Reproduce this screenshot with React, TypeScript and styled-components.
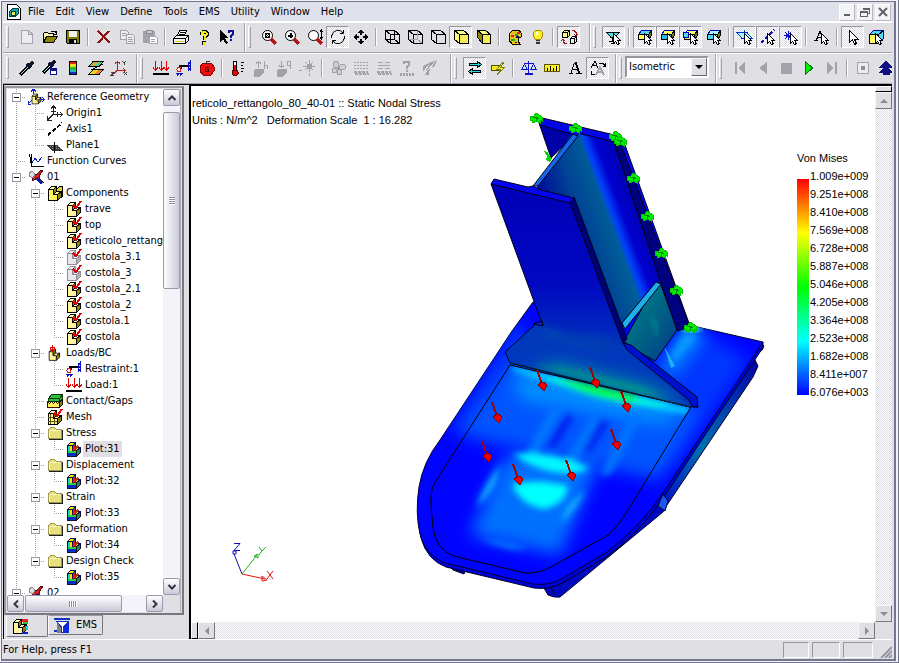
import React, { useState } from "react";
import styled, { createGlobalStyle, css } from "styled-components";

const Global = createGlobalStyle`
  * { box-sizing: border-box; }
  body { margin: 0; background: #e0dfe3; }
  button, select { font: inherit; color: inherit; margin: 0; padding: 0; border: 0; background: none; border-radius: 0; }
  ul { list-style: none; margin: 0; padding: 0; }
`;

const dither = css`
  background-color: #fff;
  background-image: conic-gradient(#dddce2 25%, transparent 0 50%, #dddce2 0 75%, transparent 0);
  background-size: 2px 2px;
`;

/* ---------- window frame ---------- */

const Desktop = styled.div`
  height: 100vh;
  min-height: 400px;
  display: flex;
  padding: 1px 2px 1px 1px;
  background: #f4f4f8;
  border-right: 1px solid #75758f;
  border-bottom: 1px solid #75758f;
  font: 11px/16px "DejaVu Sans Condensed", "Noto Sans", sans-serif;
  color: #000;
`;

const Frame = styled.div`
  flex: 1;
  min-width: 0;
  display: flex;
  flex-direction: column;
  border: 2px solid #75758f;
  border-top-width: 1px;
  border-left-width: 1px;
  background: #e0dfe3;
  padding: 0 2px 0 1px;
  overflow: hidden;
`;

const MenuBar = styled.nav`
  display: flex;
  align-items: center;
  gap: 1px;
  height: 20px;
  padding: 0 1px 0 4px;
  background: #dfe2ea;
  box-shadow: inset 0 -1px #fff;
  flex: none;
`;

const DocIcon = styled.span`
  width: 14px;
  height: 16px;
  display: flex;
  margin-right: 1px;
`;

const MenuItem = styled.button`
  padding: 0 5px;
  font-size: 11px;
`;

const WindowButtons = styled.div`
  margin-left: auto;
  display: flex;
  gap: 2px;
`;

const WindowButton = styled.button`
  width: 16px;
  height: 17px;
  display: grid;
  place-items: center;
  background: #f4f4f6;
  border: 1px solid;
  border-color: #fff #b8b8c0 #b8b8c0 #fff;
`;

/* ---------- toolbars ---------- */

const ToolRow = styled.div`
  display: flex;
  flex: none;
  height: 31px;
  border-top: 1px solid #fff;
  border-bottom: 1px solid #a5a4ac;
  overflow: hidden;
`;

const Band = styled.div<{ $grow?: boolean; $roomy?: boolean }>`
  display: flex;
  align-items: center;
  flex: ${(p) => (p.$grow ? "1 0 auto" : "none")};
  padding: 0 ${(p) => (p.$roomy ? 9 : 6)}px 2px 3px;
  border-right: ${(p) => (p.$grow ? "0" : "1px solid #a5a4ac")};
  & + & { box-shadow: inset 1px 0 #fff; }
`;

const Grip = styled.span`
  width: 3px;
  height: 22px;
  margin-right: 6px;
  border: 1px solid;
  border-color: #fff #a5a4ac #a5a4ac #fff;
  flex: none;
`;

const Tool = styled.button<{ $on?: boolean }>`
  width: 23px;
  height: 22px;
  display: grid;
  place-items: center;
  flex: none;
  border: 1px solid transparent;
  ${(p) =>
    p.$on &&
    css`
      ${dither}
      border-color: #98979f #fff #fff #98979f;
    `}
`;

const Divider = styled.span`
  width: 2px;
  height: 18px;
  margin: 0 3px;
  border-left: 1px solid #a5a4ac;
  border-right: 1px solid #fff;
  flex: none;
`;

const Glyph = styled.svg`
  width: 16px;
  height: 16px;
  display: block;
  overflow: visible;
  fill: none;
  shape-rendering: crispEdges;
`;

const Combo = styled.label`
  display: flex;
  width: 84px;
  height: 22px;
  margin: 0 0 2px -3px;
  border: 2px solid;
  border-color: #98979f #fff #fff #98979f;
  background: #fff;
`;

const ComboSelect = styled.select`
  appearance: none;
  flex: 1;
  min-width: 0;
  padding-left: 2px;
  outline: none;
`;

const ComboArrow = styled.span`
  width: 16px;
  display: grid;
  place-items: center;
  background: #e0dfe3;
  border: 1px solid;
  border-color: #f4f4f8 #68686f #68686f #f4f4f8;
  pointer-events: none;
`;

/* ---------- work area ---------- */

const Work = styled.main`
  flex: 1;
  min-height: 0;
  display: flex;
  border-top: 1px solid #000;
`;

const SidePane = styled.aside`
  width: 184px;
  flex: none;
  display: flex;
  flex-direction: column;
  border-left: 1px solid #000;
`;

const TreeFrame = styled.div`
  flex: 1;
  min-height: 0;
  display: flex;
  margin: 1px 3px 0 0;
  border: 2px solid;
  border-color: #98979f #77777f #77777f #98979f;
  padding: 1px;
`;

const TreeGrid = styled.div`
  flex: 1;
  min-width: 0;
  display: grid;
  grid-template-columns: minmax(0, 1fr) 17px;
  grid-template-rows: minmax(0, 1fr) 17px;
  background: #fff;
  border-right: 1px solid #b0b0b8;
`;

const Tree = styled.ul`
  overflow: hidden;
  min-height: 0;
`;

const Row = styled.li`
  display: flex;
  height: 16px;
  white-space: nowrap;
`;

const Guide = styled.span<{ $kind: string }>`
  width: 19px;
  height: 16px;
  flex: none;
  display: grid;
  place-items: center;
  --v: repeating-linear-gradient(#a0a09c 0 1px, transparent 1px 2px);
  --h: repeating-linear-gradient(90deg, #a0a09c 0 1px, transparent 1px 2px);
  background-repeat: no-repeat;
  background-position: 9px 0, 9px 8px;
  background-image: ${(p) => (p.$kind === " " ? "none" : p.$kind === "v" ? "var(--v)" : "var(--v), var(--h)")};
  background-size: 1px ${(p) => (p.$kind === "l" ? "8px" : "16px")}, 10px 1px;
`;

const Expander = styled.button`
  width: 9px;
  height: 9px;
  background: linear-gradient(#000, #000) center / 5px 1px no-repeat #fff;
  border: 1px solid #98979f;
`;

const NodeIcon = styled.span`
  width: 19px;
  flex: none;
  display: grid;
  place-items: center;
`;

const NodeLabel = styled.span<{ $selected?: boolean }>`
  padding: 0 2px;
  background: ${(p) => (p.$selected ? "#e0dfe3" : "none")};
`;

const Bar = styled.div<{ $dir: "v" | "h" }>`
  display: flex;
  flex-direction: ${(p) => (p.$dir === "v" ? "column" : "row")};
  justify-content: space-between;
  background: #f3f3f9;
`;

const BarButton = styled.button`
  width: 17px;
  height: 17px;
  flex: none;
  display: grid;
  place-items: center;
  border: 1px solid #9a9aac;
  border-radius: 2px;
  background: linear-gradient(#fff, #c9cad8);
`;

const Thumb = styled.span<{ $dir: "v" | "h" }>`
  display: grid;
  place-items: center;
  border: 1px solid #9a9aac;
  border-radius: 2px;
  background: linear-gradient(${(p) => (p.$dir === "v" ? "90deg" : "180deg")}, #fff, #c9cad8);
  ${(p) =>
    p.$dir === "v"
      ? css`height: 35%; margin: 6px 0 auto;`
      : css`width: 62%; margin: 0 auto 0 1px;`}
`;

const Ribs = styled.i<{ $dir: "v" | "h" }>`
  width: ${(p) => (p.$dir === "v" ? 6 : 8)}px;
  height: ${(p) => (p.$dir === "v" ? 8 : 6)}px;
  background: repeating-linear-gradient(${(p) => (p.$dir === "v" ? "180deg" : "90deg")}, #8d8d9f 0 1px, #fff 1px 2px);
`;

const Tabs = styled.div`
  display: flex;
  height: 22px;
  margin: 0 0 2px 2px;
`;

const Tab = styled.button<{ $active?: boolean }>`
  display: flex;
  align-items: center;
  gap: 6px;
  padding: 0 5px;
  height: ${(p) => (p.$active ? 22 : 20)}px;
  width: ${(p) => (p.$active ? "42px" : "auto")};
  border: 1px solid;
  border-color: ${(p) => (p.$active ? "transparent" : "#98979f")} #77777f #77777f #fff;
  border-radius: 0 0 2px 2px;
`;

const ViewFrame = styled.section`
  flex: 1;
  min-width: 0;
  margin-left: 2px;
  border-left: 2px solid #000;
  border-top: 1px solid #000;
  display: grid;
  grid-template-columns: minmax(0, 1fr) 17px;
  grid-template-rows: minmax(0, 1fr) 17px;
`;

const Viewport = styled.div`
  background: #fff;
  display: flex;
  min-width: 0;
  min-height: 0;
  overflow: hidden;
  font: 11px/17px "Liberation Sans", Arial, sans-serif;
`;

const Notes = styled.div`
  flex: 1;
  min-width: 0;
  display: flex;
  flex-direction: column;
  justify-content: space-between;
  padding: 9px 0 35px 1px;
  white-space: pre;
`;

const Caption = styled.p`
  margin: 0;
`;

const TriadSvg = styled.svg`
  width: 56px;
  height: 46px;
  margin-left: 35px;
`;

const ModelSvg = styled.svg`
  width: 360px;
  height: 500px;
  margin-top: 19px;
  flex: none;
`;

const Legend = styled.div`
  width: 78px;
  margin: 64px 0 0 27px;
  flex: none;
`;

const LegendBody = styled.div`
  display: flex;
`;

const Ramp = styled.div`
  width: 12px;
  margin: 12px 1px 6px 0;
  background: linear-gradient(#f00, #ff0 25%, #0f0 50%, #0ff 75%, #00f);
`;

const Values = styled.ul`
  line-height: 18px;
`;

const OldBar = styled.div<{ $dir: "v" | "h" }>`
  ${dither}
  display: flex;
  flex-direction: ${(p) => (p.$dir === "v" ? "column" : "row")};
`;

const SplitBox = styled.span<{ $dir: "v" | "h" }>`
  background: #e0dfe3;
  flex: none;
  border: 1px solid;
  border-color: #fff #000 #000 #fff;
  ${(p) => (p.$dir === "v" ? css`height: 6px;` : css`width: 7px;`)}
`;

const OldButton = styled.button<{ $end?: boolean; $dir: "v" | "h" }>`
  width: 17px;
  height: 17px;
  flex: none;
  display: grid;
  place-items: center;
  background: #e0dfe3;
  border: 1px solid;
  border-color: #f8f8fa #77777f #77777f #f8f8fa;
  ${(p) => p.$end && (p.$dir === "v" ? css`margin-top: auto;` : css`margin-left: auto;`)}
`;

const Corner = styled.span`
  background: #e0dfe3;
`;

const StatusBar = styled.footer`
  display: flex;
  flex: none;
  height: 20px;
  align-items: center;
  border-top: 1px solid #fff;
  gap: 3px;
`;

const StatusText = styled.span`
  flex: 1;
`;

const Pane = styled.span<{ $w: number }>`
  width: ${(p) => p.$w}px;
  height: 16px;
  border: 1px solid;
  border-color: #98979f #fff #fff #98979f;
`;

const SizeGrip = styled.svg`
  width: 12px;
  height: 12px;
  margin: 4px 0 0 4px;
`;

/* ---------- icon drawings, on a 16 x 16 grid ---------- */

const G = "#a3a2aa";
const K = "#000";

const cursorArrow = <path d="M7.500 4.500v10l2-2 2 3 2-1-2-3h3z" fill="#fff" stroke="#000" strokeWidth="1" />;

const block = (front: string, top: string, side: string, line = K) => (
  <g stroke={line} strokeLinejoin="round">
    <path d="M1.500 4.500h5v5h4v6h-9z" fill={front} />
    <path d="M1.500 4.500l3-3h5l-3 3z" fill={top} />
    <path d="M6.500 4.500l3-3v5l-3 3zM10.500 9.500l4-3v5l-4 4z" fill={side} />
    <path d="M6.500 9.500l3-3h5l-4 3z" fill={top} />
  </g>
);

const tick = <path d="M7 4l3 3 5-7" stroke="#e00000" strokeWidth="2" />;

const folder = (
  <g>
    <path d="M1.500 4.500l2-2h4l2 2h5v9h-13z" fill="#e6e07c" stroke="#a0984a" />
    <path d="M2 14.500h13.500V5" stroke="#202020" />
    <path d="M2.500 6v6M3 5.500h10" stroke="#fffcc8" />
  </g>
);

const wireCube = (front: string, hidden: string | null, top = "none") => (
  <g stroke={K}>
    <path d="M1.500 1.500h9l5 4v9h-9l-5-4z" fill={top} />
    <path d="M6.500 5.500h9v9h-9z" fill={front} />
    <path d="M1.500 1.500l5 4" />
    {hidden && <path d="M10.500 1.500v9h-9M10.500 10.500l5 4" stroke={hidden} />}
  </g>
);

const magnifier = (
  <g>
    <circle cx="6.500" cy="6.500" r="5" fill="#fff" stroke={K} shapeRendering="geometricPrecision" />
    <path d="M10 10l5 5" stroke="#b01818" strokeWidth="3" />
  </g>
);

const pickBox = (top: string, front: string) => (
  <g>
    <path d="M1.500 5.500l3-4h10l-3 4z" fill={top} stroke="#0000b0" />
    <path d="M1.500 5.500h10v5h-10z" fill={front} stroke={K} />
    <path d="M11.500 5.500l3-4v5l-3 4z" fill="#7a7a00" stroke={K} />
    {cursorArrow}
  </g>
);

const loads = (
  <g>
    <path d="M2.500 1v9M8.500 1v9M13.500 1v9M0 7.500l2.500 3 2.500-3M6 7.500l2.500 3 2.500-3M11 7.500l2.500 3 2.500-3" stroke="#e00000" />
    <path d="M0 14h16" stroke={K} strokeWidth="2" />
  </g>
);

const restraint = (
  <g>
    <path d="M3 6h9M5 5v4" stroke={K} strokeWidth="2" />
    <path d="M12 5l3-4M12 8l3-4M12 11l3-4M14.500 0v11M12.500 2v8" stroke="#1010c0" />
    <circle cx="3" cy="9.500" r="2" fill="#fff" stroke="#d02020" />
    <path d="M0 13.500h7M1 15.500l2-2M4 15.500l2-2" stroke="#1010c0" />
  </g>
);

const part = block("#fff3a0", "#ffffc0", "#8a8400");
const plot = (
  <g>
    {block("#30d040", "#f0e820", "#209040", "#101040")}
    <path d="M2 12h8v3h-8z" fill="#0030c0" />
    <path d="M2 5h1v6h-1z" fill="#20d0c0" />
    <path d="M4 5h2v5h-2z" fill="#ffe000" />
    <path d="M8 4v5l4-4" stroke="#d02010" strokeWidth="2" />
  </g>
);

const icons: Record<string, React.ReactNode> = {
  new: <path d="M2.500 1.500h7l4 3.500v9.500h-11zM9.500 1.500v4h4" fill="#ecebef" stroke={G} />,
  open: (
    <g stroke={K}>
      <path d="M1.500 13.500v-9l1-1h3l1 1h5v3" fill="#fff8a0" />
      <path d="M1.500 13.500l3-6h11l-4 6z" fill="#8a8400" />
      <path d="M9 2.500h4l1.500 2.500M14.500 2v3.500h-3" />
    </g>
  ),
  save: (
    <g>
      <path d="M1.500 1.500h13v13h-12l-1-1z" fill="#808000" stroke={K} />
      <path d="M4 2h8v6h-8z" fill="#f0f0f0" />
      <path d="M4 10h8v5h-8z" fill={K} />
      <path d="M9 11h2v3h-2z" fill="#e0dfe3" />
    </g>
  ),
  delete: <path d="M2 2l12 12M13 2l-11 12" stroke="#8c1010" strokeWidth="2" />,
  copy: (
    <g fill="#ecebef" stroke={G}>
      <path d="M1.500 1.500h6l2 2v7h-8zM3 4.500h4M3 6.500h4" />
      <path d="M7.500 5.500h6l2 2v7h-8zM9 8.500h4M9 10.500h5M9 12.500h5" />
    </g>
  ),
  paste: (
    <g>
      <path d="M1 2h12v12h-12z" fill={G} />
      <path d="M4 1h6v3h-6z" fill="#c8c8cf" stroke="#8d8d95" />
      <path d="M7.500 7.500h6l2 2v5h-8zM9 10.500h4M9 12.500h4" fill="#fff" stroke={G} />
    </g>
  ),
  print: (
    <g stroke={K}>
      <path d="M4.500 6.500l2-5h7l-2 5z" fill="#fff" />
      <path d="M7 3.500h5M6 5.500h5" />
      <path d="M.5 9.500l3-3h12v5l-3 3h-12z" fill="#f4f4f4" />
      <path d="M.5 9.500h12v5M12.500 9.500l3-3" />
      <path d="M2 12h9" stroke="#d8d020" />
    </g>
  ),
  help: (
    <g>
      <path d="M4 6V3l2-2h4l3 2v3l-3 3v2H7V8l2-3H7v1zM6 12h4v4H6z" fill={K} />
      <path d="M5 5V3l2-1h2l2 2v2L9 8v2H8V7l2-2V4L9 3H7v2zM7 13h2v2H7z" fill="#f8f000" stroke="#f8f000" />
    </g>
  ),
  whats: (
    <g>
      <path d="M1 1v12l3-3 3 5 2-1-3-5h4z" fill={K} />
      <path d="M10 4V2h4v3l-2 2v2M12 10v2" stroke="#101090" strokeWidth="2" />
    </g>
  ),
  zoomfit: <g>{magnifier}<path d="M4.500 4.500h4v4h-4zM4 4l5 5M9 4l-5 5" stroke={K} /></g>,
  zoomin: <g>{magnifier}<path d="M6.500 4v5M4 6.500h5" stroke={K} strokeWidth="2" /></g>,
  zoomdyn: <g>{magnifier}<path d="M14.500 1v9M13 3l1.500-2L16 3M13 8l1.500 2L16 8" stroke={K} /></g>,
  rotate: (
    <g stroke={K} shapeRendering="geometricPrecision">
      <path d="M2 6.500A6 6 0 0 1 13 4M14 9.500A6 6 0 0 1 3 12" />
      <path d="M10 4.500h3.500V1M6 11.500H2.500V15" strokeWidth="1" />
      <path d="M1.500 6v3M14.500 7v3" />
    </g>
  ),
  pan: (
    <g fill={K}>
      <path d="M8 0l3.500 4h-7zM8 16l3.500-4h-7zM0 8l4-3.500v7zM16 8l-4-3.500v7z" />
      <path d="M7 3h2v3h-2zM7 10h2v3h-2zM3 7h3v2h-3zM10 7h3v2h-3z" />
    </g>
  ),
  wire: wireCube("none", K),
  hiddenGray: wireCube("none", G),
  hiddenOff: wireCube("none", null),
  shaded: wireCube("#f4ec58", null, "#ffff80"),
  shadow: (
    <g stroke={K}>
      <path d="M1.500 1.500h8l5 4h-8z" fill="#ffff80" />
      <path d="M1.500 1.500l5 4v9l-5-6z" fill="#8a8400" />
      <path d="M6.500 5.500h8v9h-8z" fill="#f4ec58" />
    </g>
  ),
  palette: (
    <g>
      <path d="M6 1h6l2 3v4l-3 1v3l2 3H5l-3-4V5z" fill="#e8c020" stroke={K} />
      <path d="M4 6h3v2H4zM10 3h3v2h-3z" fill="#e02020" />
      <path d="M8 5h3v2H8z" fill="#20a020" />
      <path d="M4 10h4v2H4z" fill="#20b020" />
      <path d="M9 7h3v2H9zM8 13h2v1H8z" fill="#101060" />
    </g>
  ),
  bulb: (
    <g>
      <path d="M5.500 10.500l-2-3v-4l2-2h5l2 2v4l-2 3z" fill="#fff030" stroke="#a09000" />
      <path d="M6 3h2v3H6z" fill="#fff" />
      <path d="M6 11h4v4h-4z" fill="#303030" />
      <path d="M6 12.500h4" stroke="#c0c0c0" />
    </g>
  ),
  swapParts: (
    <g>
      <path d="M1.500 3.500h5v5h-5zM1.500 3.500l2-2h5v5l-2 2M6.500 3.500l2-2" stroke={K} fill="#fff690" />
      <path d="M9.500 9.500h4v5h-4zM9.500 9.500l2-2h4v5l-2 2M13.500 9.500l2-2" stroke={K} />
      <path d="M11 1.500h2l2 2v3M6 14.500H4l-2-2v-2M0 12l2-2 2 2M13 5l2 2 2-2" stroke="#a01010" />
    </g>
  ),
  filter: (
    <g>
      <path d="M1 3.500h12l-4 5h-4z" fill="#50e0e8" stroke={K} />
      <path d="M6.500 8v4M3 12.500h8M5 14.500h4" stroke={K} />
      {cursorArrow}
    </g>
  ),
  pickFace: pickBox("#50d8f0", "#ffff60"),
  pickEdge: pickBox("#ffff60", "#30b8e8"),
  pickVertex: <g>{pickBox("#ffff60", "#ffee20")}<path d="M.5 3.500h5v5h-5z" fill="#50d8f0" stroke="#0000b0" /></g>,
  pickBody: pickBox("#a8f4ff", "#50d8f0"),
  pickPlane: <g><path d="M0 3.500h10l5 6H5z" fill="#a8f4ff" stroke="#0030c0" /><path d="M7.500 1v12" stroke="#0030c0" strokeDasharray="2 1" />{cursorArrow}</g>,
  pickAxis: <g><path d="M1 14L14 1" stroke="#1010b0" strokeWidth="2" strokeDasharray="4 2" />{cursorArrow}</g>,
  pickPoint: <g><path d="M5 2v9M1 6.500h9M2 3l6 7M8 3l-6 7" stroke="#1010d0" />{cursorArrow}</g>,
  pickText: <g><path d="M0 11.500h4M2 12L6 2l4 10M3 8.500h5M8 11.500h4" stroke={K} />{cursorArrow}</g>,
  pointer: <path d="M4.500 1.500v12l3-3 2 5 2-1-2-4h4z" fill="#fff" stroke={K} />,
  pickCube: (
    <g>
      <path d="M1.500 5.500l4-4h10v8l-5 5h-9z" fill="#50d8f0" stroke="#0000a0" />
      <path d="M1.500 5.500h9v9h-9z" fill="#ffff60" stroke={K} />
      <path d="M10.500 5.500l5-4" stroke={K} />
      {cursorArrow}
    </g>
  ),
  pickCut: <path d="M1.500 1.500h8v6h-8z" fill="#30b8d8" stroke="#0000b0" />,
  dropper: (
    <g>
      <path d="M1 15L10 6" stroke={K} strokeWidth="3" />
      <path d="M2 14l7-7" stroke="#a0f0f4" />
      <path d="M8 4l4 4M10 6l4-4" stroke="#101030" strokeWidth="3" />
    </g>
  ),
  dropperWin: (
    <g>
      <path d="M1 13L9 5" stroke={K} strokeWidth="3" />
      <path d="M2 12l6-6" stroke="#a0f0f4" />
      <path d="M7 3l4 4M9 5l4-4" stroke="#101030" strokeWidth="3" />
      <path d="M8.500 8.500h6v6h-6z" fill="#fff" stroke="#101090" />
      <path d="M8 9.500h7" stroke="#101090" strokeWidth="2" />
    </g>
  ),
  ramp: (
    <g>
      <path d="M4 1h8v4H4z" fill="#f02010" />
      <path d="M4 4h8v3H4z" fill="#e8e020" />
      <path d="M4 7h8v3H4z" fill="#20c030" />
      <path d="M4 10h8v3H4z" fill="#20b8c8" />
      <path d="M4 12h8v3H4z" fill="#1030c0" />
      <path d="M4.500 1.500h7v13h-7z" stroke={K} />
    </g>
  ),
  sections: (
    <g stroke={K}>
      <path d="M1 6.500l4-5h10l-4 5z" fill="#50d0a0" />
      <path d="M3 5l3-3h4L6 6z" fill="#e8a020" stroke="none" />
      <path d="M1 14.500l4-5h10l-4 5z" fill="#f0d820" />
      <path d="M6 14l4-4h4l-3 4z" fill="#f08030" stroke="none" />
      <path d="M15 4L3 10" />
    </g>
  ),
  axes: (
    <g stroke="#b02020">
      <path d="M6.500 1v9.500h8M6.500 10l-4 4M4 3.500l2.500-2L9 3.500M12 8l2.500 2.500L12 13" />
      <path d="M11 1l2 2 2-2M13 3v2M13 12l3 3M16 12l-3 3M0 12.500h3l-3 3h3" stroke="#404040" />
    </g>
  ),
  loads,
  restraint,
  apple: (
    <g>
      <path d="M3 4l3-1 2 1 2-1 3 1 2 3v4l-3 4-4 1-4-1-3-4V7z" fill="#f01010" stroke="#900000" />
      <path d="M7.500 4V1h3" stroke="#303030" />
      <path d="M10 7.500H6.500v4h3v-2H8" stroke="#500000" />
    </g>
  ),
  thermo: (
    <g>
      <path d="M3.500 1.500h3v8h-3z" fill="#fff" stroke={K} />
      <path d="M5 5v8" stroke="#e01010" strokeWidth="2" />
      <path d="M3 10h4l1 2v2l-1 1H3l-1-1v-2z" fill="#d01010" stroke="#600000" />
      <path d="M11 2.500h3M11 5.500h2M11 8.500h3M11 11.500h2" stroke={K} />
    </g>
  ),
  fluxUp: <g stroke={G}><path d="M1 11l3-2h6v4l-3 3H1z" fill={G} /><path d="M5.500 8V1M3 3.500l2.500-2 2.500 2M11.500 1v8M12 5.500h2.500V9" /></g>,
  fluxDown: <g stroke={G}><path d="M1 11l3-2h6v4l-3 3H1z" fill={G} /><path d="M5.500 1v7M3 5.500l2.500 2 2.500-2M14.500 1v8M14 1.500h-2.500V5H14" /></g>,
  radiate: <g stroke={G}><path d="M8 4h4v4H8z" fill={G} /><path d="M10 0v12M4 6.500h12M6 2l8 8M14 2l-8 8M0 10h3M10 13v3" /></g>,
  fan: (
    <g fill="#d0cfd6" stroke={G}>
      <path d="M8 8L4 7 3 3l3-2 3 2zM8 8l3-4 4 1v4l-3 1zM8 8l4 3-1 4-4-1zM8 8l-2 5-4-1v-3z" />
      <path d="M7 7h2v2H7z" fill="#8d8d95" />
    </g>
  ),
  meshA: <g stroke={G}><g strokeDasharray="2 1"><path d="M1 2.500h14M1 5.500h14M1 8.500h14" /></g><path d="M1 12h14M2 14h14" strokeWidth="2" strokeDasharray="3 1" /></g>,
  meshB: <g stroke={G}><path d="M2 2.500h5M9 2.500h5M2 5.500h12M2 8.500h5M9 8.500h5" /><path d="M1 12h14M2 14h14" strokeWidth="2" strokeDasharray="3 1" /></g>,
  query: <g stroke={G}><path d="M5 4V2h5v3L8 7v2M8 10v2" strokeWidth="2" /><path d="M1 14h14" strokeWidth="3" strokeDasharray="2 1" /></g>,
  probe: <g fill={G}><path d="M1 6l6-3 8-3-2 6-5 2-1 7H3l3-6-5 2z" /><path d="M2 11l5-6M6 10l7-8" stroke="#e0dfe3" /></g>,
  swap: (
    <g fill="#30d8e0" stroke={K}>
      <path d="M2.500 3.500h8v-2l4 3-4 3v-2h-8z" />
      <path d="M13.500 10.500h-8v-2l-4 3 4 3v-2h8z" />
    </g>
  ),
  update: <g><path d="M1.500 5.500h9v5h-9z" fill="#f0e820" stroke="#505000" /><path d="M13 2L7 9h4l-4 6 8-8h-4l3-5z" fill="#f8f040" stroke="#808000" /></g>,
  scale: (
    <g stroke="#1010d0">
      <path d="M7.500 1v13M3 3.500h10" />
      <path d="M4 14h8" strokeWidth="2" />
      <path d="M3.500 4L1 9.500h5zM12.500 4L10 9.500h5z" fill="#b8f0f8" />
    </g>
  ),
  ruler: <g><path d="M.5 4.500h15v7h-15z" fill="#f8ec20" stroke="#605800" /><path d="M3.500 8v3M6.500 6v5M9.500 8v3M12.500 6v5" stroke={K} /></g>,
  textA: <path d="M2 13.500h4M4 13L7.500 3M5 9.500h6M9 13.500h6M8 2l4 12M9 2l4 12" stroke={K} />,
  textFind: (
    <g stroke={K}>
      <path d="M1 8L5 1l3 7M3 5.500h4M9 3h4l2 3M15.500 3v3h-3M1 11v3h4" />
      <path d="M6 15l4-8 4 8M8 12h4" stroke={G} strokeWidth="2" />
    </g>
  ),
  first: <path d="M3 2h2v12H3zM13 2v12L6 8z" fill={G} />,
  prev: <path d="M12 2v12L4 8z" fill={G} />,
  stop: <path d="M3 3h11v11H3z" fill={G} />,
  play: <path d="M4.500 1.500v13l7-6.500z" fill="#00f000" stroke="#107010" />,
  last: <path d="M11 2h2v12h-2zM3 2v12l7-6z" fill={G} />,
  record: <g><path d="M2.500 2.500h11v11h-11z" fill="#ecebef" stroke={G} /><path d="M6 6h4v4H6z" fill="#8d8d95" /></g>,
  up: <path d="M8 1l6 6H2zM8 6l6 6h-3v2H5v-2H2z" fill="#101080" stroke="#101080" />,
  refGeo: (
    <g>
      <g transform="translate(3 4) scale(.7)">{part}</g>
      <path d="M5.500 0v5M3 2.500L5.500 0 8 2.500M12 10.500h4M14 8l2 2.500-2 2.500M4 11l-4 4M0 12v3.500h3" stroke="#1020d0" />
    </g>
  ),
  origin: <path d="M6.500 0v9.500h9M6.500 9L1 14.500M4 3.500L6.500 1 9 3.500M13 7l2.500 2.500L13 12M.5 11v4h4M10.500 7v5M4 6.500h5" stroke="#202020" />,
  axis: <path d="M1 14L15 2" stroke={K} strokeWidth="2" strokeDasharray="4 2" />,
  plane: <g><path d="M0 8h11l5 6H5z" fill="#383838" /><path d="M3 9.500h10M5 11.500h10" stroke="#909090" strokeDasharray="1 1" /><path d="M7.500 5v11" stroke={K} /></g>,
  curves: <g><path d="M3.500 1v12.500H16M1.500 1l2 12" stroke={K} /><path d="M4 10l3-5 3 4 4-5" stroke="#1020c0" /></g>,
  study: (
    <g>
      <path d="M4 3l4 3 5-5h2l-4 6 1 3 4 4-4-2-3-3-4 3z" fill="#d02020" stroke="#501010" />
      <path d="M7 9l5 6 3-1-5-6z" fill="#1020a0" />
      <path d="M1 4l3-2 3 3-2 4-4-2z" fill="#d8e0e8" stroke="#889" />
    </g>
  ),
  comps: <g>{block("#fff060", "#ffff90", "#8a8400")}<path d="M9.500 4.500l3-3h3v9l-1 2v-6h-5z" fill="#d8d030" stroke={K} /></g>,
  part: <g>{part}{tick}</g>,
  partOff: <g>{block("#e8e8ec", "#f4f4f8", "#b0b0b8", "#909098")}{tick}</g>,
  loadsBc: <g><g transform="translate(1 3) scale(.8)">{part}</g><path d="M5.500 0v6M3 3.500l2.500 3L8 3.500M3 2.500h5" stroke="#e01010" /></g>,
  contact: (
    <g>
      <path d="M1.500 5.500l3-4h11v4l-3 3h-11z" fill="#30c040" stroke="#083808" />
      <path d="M1.500 5.500h11v3M12.500 5.500l3-4" stroke="#083808" />
      <path d="M.5 14.500v-6l2 2 2-2 2 2 2-2 2 2 2-2v6z" fill="#fff060" stroke="#401000" />
      <path d="M12.500 9.500l3-3v5l-3 3z" fill="#8a8400" stroke={K} />
    </g>
  ),
  mesh: <g>{part}<path d="M3.500 5v10M1 8.500h5M1 12.500h9M7.500 10v5" stroke="#605800" />{tick}</g>,
  folder,
  plot,
  tabPlot: <g>{part}<path d="M10 1h6v3h-6z" fill="#e82020" /><path d="M11 4h5v2h-5z" fill="#20c030" /><path d="M14 8h2v4h-2z" fill="#20c8d8" /><path d="M10 14h6v2h-6z" fill="#1020c0" /></g>,
  ems: (
    <g>
      <path d="M0 2h16M0 14h3" stroke="#1030c0" strokeWidth="2" />
      <path d="M3 5h5v11H3z" fill="#808088" />
      <path d="M8 5h7v11H8z" fill="#1028e0" />
      <path d="M2.500 4.500h12L9.500 10v5.500h-2V10z" fill="#fff" stroke="#1030c0" />
    </g>
  ),
};

const Icon = ({ name }: { name: string }) => (
  <Glyph viewBox="0 0 16 16" aria-hidden="true">{icons[name]}</Glyph>
);

/* ---------- data ---------- */

type Item = string;
const DIV = "|";

const rowOne: Item[][] = [
  ["new", "open", "save", DIV, "delete", "copy", "paste", DIV, "print", "help", "whats"],
  ["zoomfit", "zoomin", "zoomdyn", "*rotate", "pan", DIV, "wire", "hiddenGray", "hiddenOff", "*shaded", "shadow", DIV, "palette", "bulb", DIV, "*swapParts"],
  ["*filter", DIV, "*pickFace", "*pickEdge", "*pickVertex", "pickBody", DIV, "*pickPlane", "*pickAxis", "*pickPoint", DIV, "pickText", DIV, "*pointer", "pickCube", "pickCut"],
];

const rowTwo: Item[][] = [
  ["dropper", "dropperWin", "ramp", "sections", "axes"],
  ["loads", "restraint", "apple", DIV, "thermo", "fluxUp", "fluxDown", "radiate", DIV, "fan", "meshA", "meshB", "query", "probe"],
  ["*swap", "update", DIV, "scale", "ruler", "textA", "*textFind"],
];

const playback: Item[] = ["first", "prev", "stop", "play", "last", DIV, "record", "up"];

const menus = ["File", "Edit", "View", "Define", "Tools", "EMS", "Utility", "Window", "Help"];

const nodes: [string, string, string][] = [
  ["-", "refGeo", "Reference Geometry"],
  ["vt", "origin", "Origin1"],
  ["vt", "axis", "Axis1"],
  ["vl", "plane", "Plane1"],
  ["t", "curves", "Function Curves"],
  ["-", "study", "01"],
  ["v-", "comps", "Components"],
  ["vvt", "part", "trave"],
  ["vvt", "part", "top"],
  ["vvt", "part", "reticolo_rettangolo"],
  ["vvt", "partOff", "costola_3.1"],
  ["vvt", "partOff", "costola_3"],
  ["vvt", "part", "costola_2.1"],
  ["vvt", "part", "costola_2"],
  ["vvt", "part", "costola.1"],
  ["vvl", "part", "costola"],
  ["v-", "loadsBc", "Loads/BC"],
  ["vvt", "restraint", "Restraint:1"],
  ["vvl", "loads", "Load:1"],
  ["vt", "contact", "Contact/Gaps"],
  ["vt", "mesh", "Mesh"],
  ["v-", "folder", "Stress"],
  ["vvl", "plot", "Plot:31"],
  ["v-", "folder", "Displacement"],
  ["vvl", "plot", "Plot:32"],
  ["v-", "folder", "Strain"],
  ["vvl", "plot", "Plot:33"],
  ["v-", "folder", "Deformation"],
  ["vvl", "plot", "Plot:34"],
  ["v-", "folder", "Design Check"],
  ["v l", "plot", "Plot:35"],
  ["-", "study", "02"],
];

const legend = [
  "1.009e+009", "9.251e+008", "8.410e+008", "7.569e+008", "6.728e+008", "5.887e+008", "5.046e+008",
  "4.205e+008", "3.364e+008", "2.523e+008", "1.682e+008", "8.411e+007", "6.076e+003",
];

const forces = [[537, 370], [590, 367], [621, 391], [492, 402], [611, 429], [482, 441], [513, 464], [566, 460]];
const fixtures = [[536, 118], [575, 128], [615, 136], [620, 141], [633, 178], [647, 216], [661, 253], [676, 290], [690, 327]];

/* ---------- stress model ---------- */

const PLATE = "M533 302L512 331 440 440Q423 462 419 487 415 512 420 534 426 556 445 563L533 584Q550 586 563 578L607 552Q640 527 663 493L763 342 693 326 640 300z";
const INNER = "M510 365L434 484Q430 493 431 506L433 528Q436 549 453 556L525 573Q538 574 551 567L608 535Q617 528 628 510L691 407z";

const Model = () => (
  <ModelSvg viewBox="410 105 360 500" role="img" aria-label="Von Mises stress plot of the bracket">
    <defs>
      <clipPath id="plate"><path d={PLATE} /></clipPath>
      <clipPath id="inner"><path d={INNER} /></clipPath>
      <clipPath id="gusset"><path d="M538 322L505 352 510 363 690 407 698 407 695 396 625 342z" /></clipPath>
      <clipPath id="ribClip"><path d="M656 283l5 2 16 45-22 31-32-18z" /></clipPath>
      <filter id="b3"><feGaussianBlur stdDeviation="3" /></filter>
      <filter id="b8" x="-50%" y="-50%" width="200%" height="200%"><feGaussianBlur stdDeviation="8" /></filter>
      <linearGradient id="web" gradientUnits="userSpaceOnUse" x1="543" y1="190" x2="597" y2="172">
        <stop offset="0" stopColor="#001498" />
        <stop offset=".5" stopColor="#004494" />
        <stop offset="1" stopColor="#006098" />
      </linearGradient>
      <linearGradient id="flange" gradientUnits="userSpaceOnUse" x1="604" y1="208" x2="636" y2="196">
        <stop offset="0" stopColor="#00609c" />
        <stop offset=".18" stopColor="#0040f8" />
        <stop offset=".45" stopColor="#0000d0" />
        <stop offset="1" stopColor="#0000b0" />
      </linearGradient>
      <linearGradient id="front" x1="0" y1="0" x2="0" y2="1">
        <stop offset="0" stopColor="#0000b8" />
        <stop offset=".6" stopColor="#0008c0" />
        <stop offset="1" stopColor="#0034bc" />
      </linearGradient>
      <linearGradient id="side" gradientUnits="userSpaceOnUse" x1="665" y1="505" x2="757" y2="360">
        <stop offset="0" stopColor="#0010c8" />
        <stop offset=".4" stopColor="#0070b0" />
        <stop offset=".65" stopColor="#0040b0" />
        <stop offset="1" stopColor="#0000a8" />
      </linearGradient>
      <linearGradient id="rib" x1="0" y1="0" x2="1" y2="1">
        <stop offset="0" stopColor="#008c8c" />
        <stop offset=".5" stopColor="#006484" />
        <stop offset="1" stopColor="#00388c" />
      </linearGradient>
    </defs>

    <g stroke="#000028" strokeWidth="1">
      <path d="M449 565l4 5 11 4 2-5z" fill="#0000b0" />
      <path d="M541 583l7 12q7 3 12 2L663 512l4-9-7-14z" fill="#0008c0" />
      <path d="M663 496L763 342v7l-9 9 4 8-5 11L667 505z" fill="url(#side)" />
      <path d={PLATE} fill="#0000d8" transform="translate(1 4)" />
      <path d={PLATE} fill="#0004ff" />
    </g>

    <g clipPath="url(#plate)">
      <g filter="url(#b8)">
        <path d="M520 320L450 430 500 440 560 400z" fill="#0038ff" />
        <path d="M690 326L640 370 670 470 750 360z" fill="#0034ff" />
        <path d="M510 368L460 435 660 480 700 410z" fill="#0054ff" />
        <path d="M680 326l-16 44 8 6 34-45z" fill="#0084ff" />
      </g>
      <path d="M688 330q-10 10-18 26l3 8q12-14 26-28z" fill="#10b0ff" opacity=".6" filter="url(#b3)" />
      <path d="M664 346l7 22 4-2z" fill="#20b0ff" />
      <ellipse cx="692" cy="328" rx="10" ry="4" fill="#40ffb0" filter="url(#b3)" />
    </g>

    <g clipPath="url(#inner)">
      <g filter="url(#b8)">
        <path d="M505 455L470 535 560 555 600 460z" fill="#0070ff" />
        <path d="M512 372L690 412 660 425 520 400z" fill="#0090ff" />
      </g>
      <g filter="url(#b3)">
        <path d="M552 405l-26 48h12l26-45zM592 415l-30 50h12l30-45zM630 415l-30 60h10l32-58z" fill="#0074ff" />
        <path d="M566 415l-20 32h10l18-30zM600 420l-18 32h8l20-30z" fill="#0020f0" />
        <path d="M512 366L692 409 690 414Q600 402 512 370z" fill="#00e0ff" />
        <path d="M548 374l120 29-10 4q-60-4-104-25z" fill="#00ffe0" />
        <path d="M560 377l80 19-6 6q-50-6-72-22z" fill="#00ff40" />
        <path d="M512 484q28-6 56 2-2 18-24 23-24-4-32-25z" fill="#00ffff" />
        <path d="M513 454q40-4 76 14-8 7-30 5-28-4-46-19z" fill="#00f8ff" />
        <path d="M500 465q-16 20-24 42 22-16 24-42zM586 490q-10 20-25 34 2-20 25-34z" fill="#10b0ff" />
        <path d="M480 538q25 4 48 10-20 4-48-10z" fill="#0090ff" />
      </g>
    </g>
    <path d={INNER} fill="none" stroke="#000" />

    <g stroke="#000020" strokeLinejoin="round">
      <path d="M539 123L551 158 574 136 572 127z" fill="#0000a8" />
      <path d="M538 117L619 136 625 145 690 326 677 331 612 146 540 125z" fill="#0404e8" />
      <path d="M570 136L535 190 570 204 623 330 643 308 584 135z" fill="url(#web)" stroke="none" />
      <path d="M578 134L614 142 677 331 642 312z" fill="url(#flange)" stroke="none" />
      <path d="M578 133L614 142 677 331" fill="none" />
      <path d="M614 142l5-2 71 187-13 4z" fill="#000080" />
      <path d="M573 134l5 2-40 50-5 0z" fill="#1468e8" />
      <path d="M656 283l5 2 16 45-22 31-32-18z" fill="url(#rib)" />
      <path d="M656 282l5 2-36 45-3-6z" fill="#20b0e8" />
    </g>
    <path d="M650 318q6 6 8 18" fill="none" stroke="#00a890" strokeWidth="5" opacity=".5" filter="url(#b3)" clipPath="url(#ribClip)" />

    <path d="M538 322L505 352 510 363 690 407 698 407 695 396 625 342z" fill="#0038bc" stroke="#000020" />
    <g clipPath="url(#gusset)">
      <path d="M530 366L692 409 650 384 560 362z" fill="#0088a0" filter="url(#b8)" />
      <path d="M530 364L670 400 640 387 560 368z" fill="#00a880" filter="url(#b3)" />
      <path d="M650 358L700 410 690 380z" fill="#0010b0" filter="url(#b3)" />
    </g>
    <path d="M623 343l8 2 66 52 1 10-6-1-3-6-62-50z" fill="#0010d0" stroke="#000020" />
    <path d="M510 363L690 407" stroke="#002020" />

    <path d="M491 184L570 202 623 343 600 350 543 326z" fill="url(#front)" />
    <path d="M542 322q20 12 56 12l22 8-20 12-56-14z" fill="#0044b0" opacity=".6" filter="url(#b3)" />
    <path d="M543 326L491 184 570 202 623 342" fill="none" stroke="#000020" />
    <path d="M570 202l4-5 53 142-4 4z" fill="#000078" stroke="#000020" />
    <path d="M491 184l3-5 34 8 5-1 8 4 33 8-4 5z" fill="#0404f0" stroke="#000020" />
    <path d="M533 324l10 2-1-5z" fill="#0020c0" stroke="#000020" />

    <path d="M663 494l5 7-3 10-7-5z" fill="#1858f0" stroke="#000020" />
    <path d="M549 586l7 9" stroke="#000020" />

    {forces.map(([x, y]) => (
      <g key={`${x}-${y}`} transform={`translate(${x} ${y})`} shapeRendering="crispEdges">
        <path d="M0 0l5 14" stroke="#a00000" strokeWidth="2" />
        <path d="M1 15l5-3 3 2v3l-2 4-3-3z" fill="#f00000" stroke="#900000" strokeWidth="1" />
      </g>
    ))}
    {fixtures.map(([x, y]) => (
      <g key={`${x}-${y}`} transform={`translate(${x} ${y})`} shapeRendering="crispEdges">
        <path d="M-6-2l4 0 2-3 6 4v4l-2-1v3l-4-2-3 2-1-3-2 1z" fill="#00f000" stroke="#00c000" />
        <path d="M0-1v4M-3 0l3-1 3 2" stroke="#008800" fill="none" />
      </g>
    ))}
    <path d="M544 151l4 1 1 4 3 2-2 4-4-2 1-4z" fill="#00d800" shapeRendering="crispEdges" />
  </ModelSvg>
);

const Triad = () => (
  <TriadSvg viewBox="228 542 56 46" role="img" aria-label="X Y Z axes" fill="none">
    <path d="M243 575L235 555M234 552h3v3h-3zM235 544.500h6l-6 7h6" stroke="#1010b0" />
    <path d="M243 575L258 556M255 557l4-2v4zM260 548l3 4 4-4M263 552l-3 4" stroke="#20b020" />
    <path d="M243 575L266 580M263 577l5 4-5 1zM268 572l6 8M274 572l-6 8" stroke="#e01010" />
  </TriadSvg>
);

/* ---------- composition ---------- */

const Tools = ({ items }: { items: Item[] }) => (
  <>
    {items.map((it, i) => {
      if (it === DIV) return <Divider key={i} />;
      const on = it.startsWith("*");
      const name = on ? it.slice(1) : it;
      return (
        <Tool key={i} $on={on} aria-label={name} aria-pressed={on}>
          <Icon name={name} />
        </Tool>
      );
    })}
  </>
);

const Chevron = ({ turn }: { turn: number }) => (
  <svg width="10" height="10" viewBox="0 0 10 10" aria-hidden="true">
    <path d="M1.500 7L5 3.500 8.500 7" fill="none" stroke="#33333d" strokeWidth="2" transform={`rotate(${turn} 5 5)`} />
  </svg>
);

const Triangle = ({ turn, color = "#8d8d95" }: { turn: number; color?: string }) => (
  <svg width="8" height="8" viewBox="0 0 8 8" aria-hidden="true">
    <path d="M0 6l4-4 4 4z" fill={color} transform={`rotate(${turn} 4 4)`} />
  </svg>
);

export default function App() {
  const [selected, setSelected] = useState("Plot:31");
  return (
    <>
      <Global />
      <Desktop>
        <Frame>
          <MenuBar>
            <DocIcon>
              <svg width="14" height="16" viewBox="0 0 14 16" shapeRendering="crispEdges" aria-hidden="true">
                <path d="M.5.5h9l4 4v11h-13z" fill="#fff" stroke="#000" />
                <path d="M2.500 7.500l3-3h6v5l-3 3h-6z" fill="#20a0a0" stroke="#004040" />
                <path d="M4.500 7.500h4v4h-4z" fill="#f0e840" stroke="#004040" />
              </svg>
            </DocIcon>
            {menus.map((m) => <MenuItem key={m}>{m}</MenuItem>)}
            <WindowButtons>
              <WindowButton aria-label="Minimize">
                <svg width="10" height="10" shapeRendering="crispEdges"><path d="M2 8h6" stroke="#606068" strokeWidth="2" /></svg>
              </WindowButton>
              <WindowButton aria-label="Restore">
                <svg width="10" height="10" shapeRendering="crispEdges" fill="none" stroke="#606068"><path d="M3 1.500h6.500v5H8M3.500 1v2M3 2.500h6M.5 4.500h7v5h-7zM1 5.500h6" /></svg>
              </WindowButton>
              <WindowButton aria-label="Close">
                <svg width="10" height="10"><path d="M1 1l8 8M9 1l-8 8" stroke="#606068" strokeWidth="2" /></svg>
              </WindowButton>
            </WindowButtons>
          </MenuBar>

          <ToolRow role="toolbar">
            {rowOne.map((items, i) => (
              <Band key={i} $roomy={i === 1} $grow={i === 2}><Grip /><Tools items={items} /></Band>
            ))}
          </ToolRow>
          <ToolRow role="toolbar">
            {rowTwo.map((items, i) => (
              <Band key={i} $roomy={i === 1}><Grip /><Tools items={items} /></Band>
            ))}
            <Band>
              <Grip />
              <Combo>
                <ComboSelect aria-label="View orientation" defaultValue="Isometric">
                  <option>Isometric</option>
                  <option>Front</option>
                  <option>Top</option>
                </ComboSelect>
                <ComboArrow><Triangle turn={180} color="#000" /></ComboArrow>
              </Combo>
            </Band>
            <Band $grow><Grip /><Tools items={playback} /></Band>
          </ToolRow>

          <Work>
            <SidePane>
              <TreeFrame>
                <TreeGrid>
                  <Tree>
                    {nodes.map(([guides, icon, label]) => (
                      <Row key={label} onClick={() => setSelected(label)}>
                        {guides.split("").map((g, i) => (
                          <Guide key={i} $kind={g}>{g === "-" && <Expander aria-label={`Collapse ${label}`} />}</Guide>
                        ))}
                        <NodeIcon><Icon name={icon} /></NodeIcon>
                        <NodeLabel $selected={label === selected}>{label}</NodeLabel>
                      </Row>
                    ))}
                  </Tree>
                  <Bar $dir="v">
                    <BarButton aria-label="Scroll up"><Chevron turn={0} /></BarButton>
                    <Thumb $dir="v"><Ribs $dir="v" /></Thumb>
                    <BarButton aria-label="Scroll down"><Chevron turn={180} /></BarButton>
                  </Bar>
                  <Bar $dir="h">
                    <BarButton aria-label="Scroll left"><Chevron turn={270} /></BarButton>
                    <Thumb $dir="h"><Ribs $dir="h" /></Thumb>
                    <BarButton aria-label="Scroll right"><Chevron turn={90} /></BarButton>
                  </Bar>
                  <Corner />
                </TreeGrid>
              </TreeFrame>
              <Tabs>
                <Tab $active aria-label="Results"><Icon name="tabPlot" /></Tab>
                <Tab><Icon name="ems" />EMS</Tab>
              </Tabs>
            </SidePane>

            <ViewFrame>
              <Viewport>
                <Notes>
                  <div>
                    <Caption>reticolo_rettangolo_80_40-01 :: Static Nodal Stress</Caption>
                    <Caption>{"Units : N/m^2   Deformation Scale  1 : 16.282"}</Caption>
                  </div>
                  <Triad />
                </Notes>
                <Model />
                <Legend>
                  <Caption>Von Mises</Caption>
                  <LegendBody>
                    <Ramp />
                    <Values>{legend.map((v) => <li key={v}>{v}</li>)}</Values>
                  </LegendBody>
                </Legend>
              </Viewport>
              <OldBar $dir="v">
                <SplitBox $dir="v" />
                <OldButton $dir="v" aria-label="View up"><Triangle turn={0} /></OldButton>
                <OldButton $dir="v" $end aria-label="View down"><Triangle turn={180} /></OldButton>
              </OldBar>
              <OldBar $dir="h">
                <SplitBox $dir="h" />
                <OldButton $dir="h" aria-label="View left"><Triangle turn={270} /></OldButton>
                <OldButton $dir="h" $end aria-label="View right"><Triangle turn={90} /></OldButton>
              </OldBar>
              <Corner />
            </ViewFrame>
          </Work>

          <StatusBar>
            <StatusText>For Help, press F1</StatusText>
            <Pane $w={26} />
            <Pane $w={28} />
            <Pane $w={30} />
            <SizeGrip viewBox="0 0 12 12" aria-hidden="true">
              <path d="M1 12L12 1M5 12l7-7M9 12l3-3" stroke="#98979f" strokeWidth="2" />
            </SizeGrip>
          </StatusBar>
        </Frame>
      </Desktop>
    </>
  );
}
